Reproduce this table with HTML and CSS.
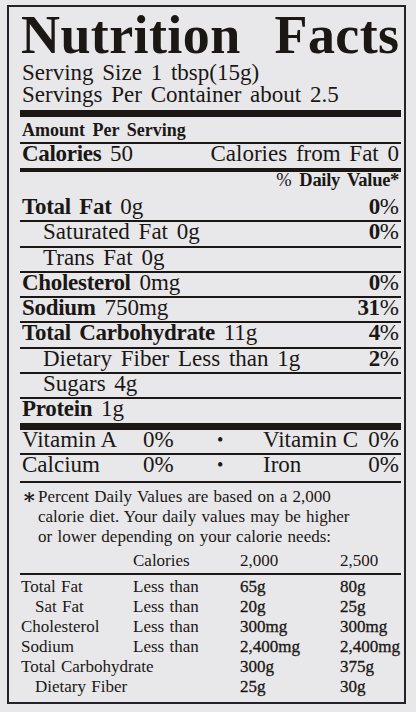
FILE: index.html
```html
<!DOCTYPE html>
<html lang="en">
<head>
<meta charset="UTF-8">
<meta name="viewport" content="width=device-width, initial-scale=1.0">
<link rel="stylesheet" href="styles.css">
<title>Nutrition Facts</title>
</head>
<body>
<div class="label">
  <h1 class="title">Nutrition Facts</h1>
  <p class="serving first">Serving Size 1 tbsp(15g)</p>
  <p class="serving">Servings Per Container about 2.5</p>

  <div class="bar thick"></div>
  <div class="amount">Amount Per Serving</div>
  <div class="calories">
    <span><b>Calories</b> 50</span>
    <span>Calories from Fat 0</span>
  </div>
  <div class="bar mid"></div>
  <div class="dv-head">% <b>Daily Value*</b></div>

  <!-- nutrients -->
  <div class="row"><span><b>Total Fat</b> 0g</span><span class="pct"><b>0</b>%</span></div>
  <div class="row sub"><span>Saturated Fat 0g</span><span class="pct"><b>0</b>%</span></div>
  <div class="row sub"><span>Trans Fat 0g</span></div>
  <div class="row"><span><b>Cholesterol</b> 0mg</span><span class="pct"><b>0</b>%</span></div>
  <div class="row"><span><b>Sodium</b> 750mg</span><span class="pct"><b>31</b>%</span></div>
  <div class="row"><span><b>Total Carbohydrate</b> 11g</span><span class="pct"><b>4</b>%</span></div>
  <div class="row sub"><span>Dietary Fiber Less than 1g</span><span class="pct"><b>2</b>%</span></div>
  <div class="row sub"><span>Sugars 4g</span></div>
  <div class="row last"><span><b>Protein</b> 1g</span></div>

  <div class="bar thick"></div>
  <div class="vit-row">
    <span>Vitamin A</span><span>0%</span><span class="dot">•</span><span>Vitamin C</span><span>0%</span>
  </div>
  <div class="vit-row end">
    <span>Calcium</span><span>0%</span><span class="dot">•</span><span>Iron</span><span>0%</span>
  </div>

  <div class="foot">
    <span class="star">∗</span>
    <p>Percent Daily Values are based on a 2,000<br>calorie diet. Your daily values may be higher<br>or lower depending on your calorie needs:</p>
  </div>

  <div class="dv-table head">
    <span></span><span>Calories</span><span>2,000</span><span>2,500</span>
  </div>
  <div class="dv-table body">
    <span>Total Fat</span><span>Less than</span><span class="num">65g</span><span class="num">80g</span>
    <span class="ind">Sat Fat</span><span>Less than</span><span class="num">20g</span><span class="num">25g</span>
    <span>Cholesterol</span><span>Less than</span><span class="num">300mg</span><span class="num">300mg</span>
    <span>Sodium</span><span>Less than</span><span class="num">2,400mg</span><span class="num">2,400mg</span>
    <span class="wide">Total Carbohydrate</span><span class="num">300g</span><span class="num">375g</span>
    <span class="ind wide">Dietary Fiber</span><span class="num">25g</span><span class="num">30g</span>
  </div>
</div>
</body>
</html>
```

FILE: styles.css
```css
body {
  margin: 0;
  background-color: #e8e8eb;
  color: #1a1714;
  font-family: "Liberation Serif", "Times New Roman", serif;
}

.label {
  margin: 5px 0 0 7px;
  border: 2px solid #24222a;
  padding: 4px 3px 5px 11px;
  width: 381px;
}

.title {
  margin: 0;
  padding-left: 1px;
  font-size: 54px;
  line-height: 48px;
  font-weight: bold;
  letter-spacing: 0.4px;
  word-spacing: 20px;
  white-space: nowrap;
}

.serving {
  margin: 0;
  padding-left: 2px;
  font-size: 23px;
  line-height: 22px;
  word-spacing: 3px;
}

.serving.first {
  margin-top: 3px;
}

.bar {
  background: #1a1714;
}

.bar.thick {
  height: 7px;
}

.serving + .bar.thick {
  margin-top: 4px;
}

.bar.mid {
  height: 4px;
}

.amount {
  padding: 1.5px 2px 0;
  font-size: 18px;
  line-height: 23px;
  font-weight: bold;
  word-spacing: 3px;
  border-bottom: 2px solid #1a1714;
}

.calories {
  display: flex;
  justify-content: space-between;
  padding: 0 2px 5px;
  font-size: 23px;
  line-height: 19.5px;
  word-spacing: 3px;
}

b {
  letter-spacing: -0.3px;
}

.dv-head {
  padding: 0 2px 9.24px;
  text-align: right;
  font-size: 18.5px;
  line-height: 16px;
  word-spacing: 3px;
}

.row {
  display: flex;
  justify-content: space-between;
  padding: 0 2px 3.25px;
  font-size: 23px;
  line-height: 20px;
  word-spacing: 3px;
  border-bottom: 2px solid #1a1714;
}

.row.sub {
  padding-left: 23px;
}

.row.last {
  padding-bottom: 3.75px;
  border-bottom: none;
}

.vit-row {
  display: grid;
  grid-template-columns: 121px 73px 47px 1fr auto;
  padding: 0 2px 3.5px;
  font-size: 23px;
  line-height: 20px;
  border-bottom: 2px solid #1a1714;
}

.vit-row.end {
  padding-bottom: 5.5px;
}

.dot {
  font-size: 18px;
  padding-left: 1px;
}

.foot {
  display: flex;
  margin-top: 4.26px;
  padding-left: 2px;
  font-size: 17px;
  line-height: 20px;
  word-spacing: 1px;
}

.foot .star {
  width: 16px;
  flex: none;
  font-family: "DejaVu Serif", serif;
  font-size: 21px;
  font-weight: bold;
}

.foot p {
  margin: 0;
}

.dv-table {
  display: grid;
  grid-template-columns: 112px 107px 100px 1fr;
  padding-left: 1px;
  font-size: 17px;
  line-height: 20px;
  word-spacing: 1px;
}

.dv-table.head {
  margin-top: 4px;
  padding-bottom: 1.5px;
  border-bottom: 2px solid #1a1714;
}

.dv-table.body {
  margin-top: 2.5px;
}

.dv-table .ind {
  padding-left: 14px;
}

.dv-table .wide {
  grid-column: span 2;
}

.dv-table .num {
  -webkit-text-stroke: 0.3px #1a1714;
}
```
